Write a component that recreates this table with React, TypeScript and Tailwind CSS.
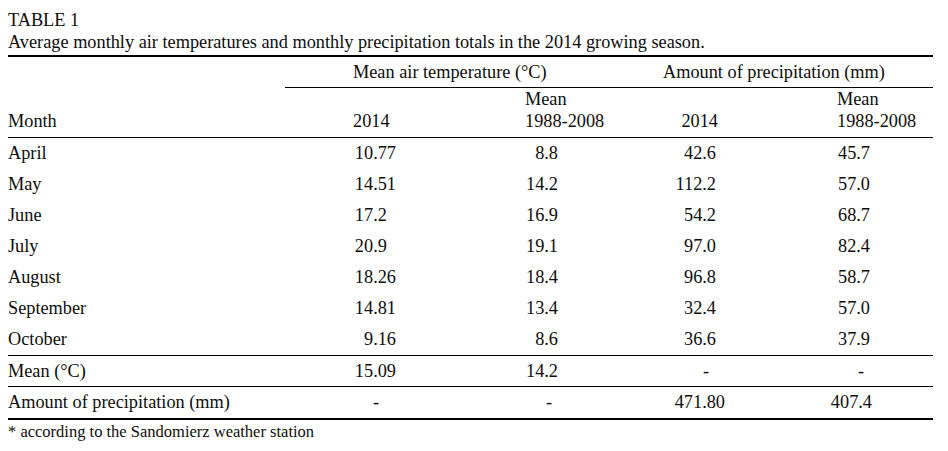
const cols = "grid grid-cols-[277px_115px_162px_158px_213px]";

type Row = {
  month: string;
  t2014: string;
  tMean: string;
  p2014: string;
  pMean: string;
};

const rows: Row[] = [
  { month: "April", t2014: "10.77", tMean: "8.8", p2014: "42.6", pMean: "45.7" },
  { month: "May", t2014: "14.51", tMean: "14.2", p2014: "112.2", pMean: "57.0" },
  { month: "June", t2014: "17.2", tMean: "16.9", p2014: "54.2", pMean: "68.7" },
  { month: "July", t2014: "20.9", tMean: "19.1", p2014: "97.0", pMean: "82.4" },
  { month: "August", t2014: "18.26", tMean: "18.4", p2014: "96.8", pMean: "58.7" },
  { month: "September", t2014: "14.81", tMean: "13.4", p2014: "32.4", pMean: "57.0" },
  { month: "October", t2014: "9.16", tMean: "8.6", p2014: "36.6", pMean: "37.9" },
];

// pad one-decimal values so the points line up with the two-decimal ones
const Decimal = ({ value }: { value: string }) => {
  const short = value.split(".")[1]?.length === 1;
  return (
    <span>
      {value}
      {short && <span className="invisible">0</span>}
    </span>
  );
};

export default function App() {
  return (
    <div className="min-h-screen bg-white text-[#0d0d0d] font-['Liberation_Serif',serif] text-[18.3px]">
      <div className="pl-[8px] pt-[9px] leading-[22px]">
        <div>TABLE 1</div>
        <div>Average monthly air temperatures and monthly precipitation totals in the 2014 growing season.</div>
      </div>

      <div className="ml-[8px] mt-[2px] w-[925px] border-t-2 border-black">
        {/* group header */}
        <div className={`${cols} h-[31px] leading-[30px]`}>
          <div />
          <div className="col-span-2 border-b border-black pl-[68px] whitespace-nowrap">
            Mean air temperature (°C)
          </div>
          <div className="col-span-2 border-b border-black pl-[101px] whitespace-nowrap">
            Amount of precipitation (mm)
          </div>
        </div>

        {/* column header */}
        <div className={`${cols} h-[50px] border-b border-black leading-[22px]`}>
          <div className="flex flex-col justify-end pb-[5px]">Month</div>
          <div className="flex flex-col justify-end pb-[5px] pl-[68px]">2014</div>
          <div className="flex flex-col justify-end pb-[5px] pl-[125px] whitespace-nowrap">
            <span>Mean</span>
            <span>1988-2008</span>
          </div>
          <div className="flex flex-col justify-end pb-[5px] items-end pr-[2px]">2014</div>
          <div className="flex flex-col justify-end pb-[5px] pl-[117px] whitespace-nowrap">
            <span>Mean</span>
            <span>1988-2008</span>
          </div>
        </div>

        {rows.map((r, i) => (
          <div
            key={r.month}
            className={`${cols} leading-[31px] ${
              i === rows.length - 1 ? "h-[32px] border-b border-black" : "h-[31px]"
            }`}
          >
            <div>{r.month}</div>
            <div className="text-right pr-[4px]">
              <Decimal value={r.t2014} />
            </div>
            <div className="text-right pr-[4px]">{r.tMean}</div>
            <div className="text-right pr-[4px]">{r.p2014}</div>
            <div className="text-right pr-[63px]">{r.pMean}</div>
          </div>
        ))}

        {/* mean row */}
        <div className={`${cols} h-[31px] border-b border-black leading-[31px]`}>
          <div>Mean (°C)</div>
          <div className="text-right pr-[4px]">15.09</div>
          <div className="text-right pr-[4px]">14.2</div>
          <div className="text-right pr-[11px]">-</div>
          <div className="text-right pr-[69px]">-</div>
        </div>

        {/* precipitation total row */}
        <div className={`${cols} h-[33px] border-b-2 border-black leading-[31px]`}>
          <div className="whitespace-nowrap">Amount of precipitation (mm)</div>
          <div className="text-right pr-[21px]">-</div>
          <div className="text-right pr-[10px]">-</div>
          <div className="text-right -mr-[5px]">471.80</div>
          <div className="text-right pr-[61px]">407.4</div>
        </div>
      </div>

      <div className="pl-[8px] pt-[2px] text-[16.5px] leading-[20px]">* according to the Sandomierz weather station</div>
    </div>
  );
}
